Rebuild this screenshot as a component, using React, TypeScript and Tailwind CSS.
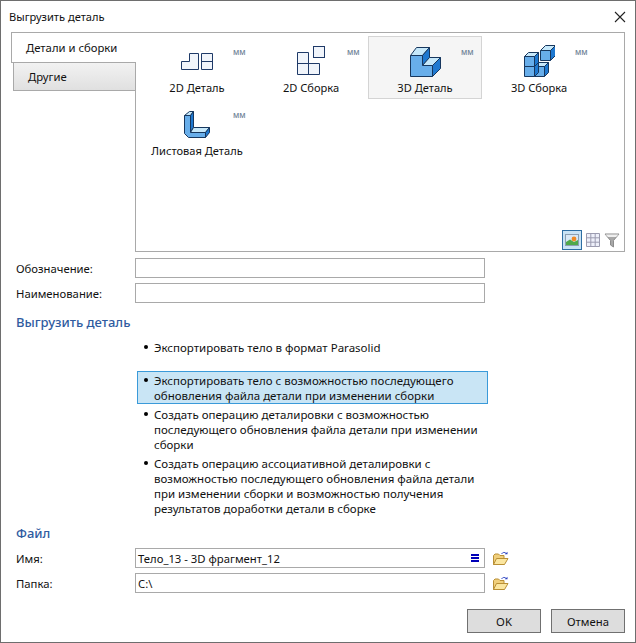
const EDGE = '#17375e';
const TOP = '#c6e8fa';
const FRONT = '#68aeea';
const SIDE = '#1e78d0';

function Cube({ x, y, s, d = 5 }: { x: number; y: number; s: number; d?: number }) {
  return (
    <g stroke={EDGE} strokeWidth="1" strokeLinejoin="round">
      <path d={`M${x} ${y}l${d} -${d}h${s}l-${d} ${d}z`} fill={TOP} />
      <path d={`M${x + s} ${y}l${d} -${d}v${s}l-${d} ${d}z`} fill={SIDE} />
      <rect x={x} y={y} width={s} height={s} fill={FRONT} />
    </g>
  );
}

const icons: Record<string, React.ReactNode> = {
  part2d: (
    <g fill="#f1f5fb" stroke="#1f3a68" strokeWidth="1">
      <path d="M0.5 24.5V16.5H8.5V8.5H17.5V24.5Z" />
      <path d="M20.5 8.5H31.5V24.5H20.5ZM20.5 16.5H31.5" />
    </g>
  ),
  asm2d: (
    <g fill="#f1f5fb" stroke="#1f3a68" strokeWidth="1">
      <rect x="18.5" y="1.5" width="11" height="11" />
      <path d="M2.5 7.5H13.5V18.5H24.5V29.5H2.5ZM2.5 18.5H13.5V29.5" />
    </g>
  ),
  part3d: (
    <g stroke={EDGE} strokeWidth="1" strokeLinejoin="round">
      <path d="M1.5 10.5L7.5 2.5H20.5L13.5 10.5Z" fill={TOP} />
      <path d="M13.5 10.5L20.5 2.5V12.5L13.5 20.5Z" fill={SIDE} />
      <path d="M13.5 20.5L20.5 12.5H31.5L23.5 20.5Z" fill={TOP} />
      <path d="M23.5 20.5L31.5 12.5V23.5L23.5 31.5Z" fill={SIDE} />
      <path d="M1.5 10.5V31.5H23.5V20.5H13.5V10.5Z" fill={FRONT} />
    </g>
  ),
  asm3d: (
    <g>
      <Cube x={17.5} y={5.5} s={10} />
      <Cube x={11.5} y={21.5} s={10} d={4} />
      <Cube x={1.5} y={21.5} s={10} d={4} />
      <Cube x={1.5} y={11.5} s={10} d={4} />
    </g>
  ),
  sheet: (
    <g stroke={EDGE} strokeWidth="1" strokeLinejoin="round">
      <path d="M3.5 7.5L8.5 3.5H12.5L9.5 7.5Z" fill={TOP} />
      <path d="M9.5 7.5L12.5 3.5V19.5L9.5 24.5Z" fill={SIDE} />
      <path d="M9.5 24.5L12.5 19.5H28.5L24.5 24.5Z" fill={TOP} />
      <path d="M24.5 24.5L28.5 19.5V24.5L24.5 29.5Z" fill={SIDE} />
      <path d="M3.5 7.5H9.5V24.5H24.5V29.5H7.5L3.5 25.5Z" fill={FRONT} />
    </g>
  ),
};

const items = [
  { label: '2D Деталь', icon: 'part2d' },
  { label: '2D Сборка', icon: 'asm2d' },
  { label: '3D Деталь', icon: 'part3d', selected: true },
  { label: '3D Сборка', icon: 'asm3d' },
  { label: 'Листовая Деталь', icon: 'sheet' },
];

const options = [
  { lines: ['Экспортировать тело в формат Parasolid'], className: 'mb-[16px]' },
  {
    lines: ['Экспортировать тело с возможностью последующего', 'обновления файла детали при изменении сборки'],
    className: 'mb-[3px]',
    active: true,
  },
  {
    lines: [
      'Создать операцию деталировки с возможностью',
      'последующего обновления файла детали при изменении',
      'сборки',
    ],
    className: 'mb-[4px]',
  },
  {
    lines: [
      'Создать операцию ассоциативной деталировки с',
      'возможностью последующего обновления файла детали',
      'при изменении сборки и возможностью получения',
      'результатов доработки детали в сборке',
    ],
  },
];

function FolderIcon() {
  return (
    <svg width="17" height="15" viewBox="0 0 17 15" className="ml-[7px]">
      <path d="M1.5 13.5V4.5L3 3H6.5L8 4.5H12V13.5Z" fill="#f0cf7c" stroke="#b98f35" />
      <path d="M1.5 13.5L4.5 7.5H16L12.5 13.5Z" fill="#fbe6a0" stroke="#b98f35" />
      <path d="M9.5 3C10.8 1 12.8 1 14 2.4" fill="none" stroke="#3a50c8" />
      <path d="M12.8 3.2H15.5V0.8Z" fill="#2a3fc0" />
    </svg>
  );
}

function Field({ label, value, menu }: { label: string; value?: string; menu?: boolean }) {
  return (
    <div className="flex items-center h-[20px]">
      <div className="w-[119px]">{label}</div>
      <div className="w-[350px] h-[20px] border border-[#a9a9a9] flex items-center justify-between pl-[2px] pr-[5px]">
        <span>{value}</span>
        {menu && (
          <div className="flex flex-col gap-[1px] w-[8px]">
            <div className="h-[2px] bg-[#0000b8]" />
            <div className="h-[2px] bg-[#0000b8]" />
            <div className="h-[2px] bg-[#0000b8]" />
          </div>
        )}
      </div>
    </div>
  );
}

export default function App() {
  return (
    <div className="relative w-[636px] h-[643px] box-border border border-[#6e6e6e] bg-white text-[11.3px] leading-[15px] text-[#111] font-['Noto_Sans','Liberation_Sans',sans-serif] overflow-hidden">
      <div className="h-[31px] flex items-center justify-between pl-[8px] pr-[9px] text-[11.1px]">
        <span>Выгрузить деталь</span>
        <svg width="12" height="12" viewBox="0 0 12 12">
          <path d="M1 1L11 11M11 1L1 11" stroke="#222" strokeWidth="1.1" />
        </svg>
      </div>

      <div className="flex h-[220px] ml-[10px]">
        <div className="w-[124px] shrink-0">
          <div className="relative z-10 w-[125px] h-[31px] bg-white border-t border-l border-b border-[#a9a9a9] flex items-center pl-[14px]">
            Детали и сборки
          </div>
          <div className="ml-[2px] h-[28px] bg-gradient-to-b from-[#f2f2f2] to-[#e0e0e0] border-l border-b border-[#a9a9a9] flex items-center pl-[14px]">
            Другие
          </div>
        </div>
        <div className="w-[490px] border border-[#a9a9a9] flex flex-col pl-[4px] pt-[3px]">
          <div className="grid grid-cols-[repeat(4,114px)] auto-rows-[63px] flex-1">
            {items.map((item) => (
              <div
                key={item.label}
                className={`relative flex flex-col items-center pt-[9px] border ${
                  item.selected ? 'bg-[#f5f5f5] border-[#d4d4d4]' : 'border-transparent'
                }`}
              >
                <svg width="32" height="32" viewBox="0 0 32 32" className="-mt-px">
                  {icons[item.icon]}
                </svg>
                <span className="absolute left-0 right-0 top-[43px] text-center whitespace-nowrap text-[11.1px]">{item.label}</span>
                <span className="absolute left-[92px] top-[11px] text-[8px] leading-[8px] font-medium text-[#6e8296]">мм</span>
              </div>
            ))}
          </div>
          <div className="flex items-center justify-end gap-[3px] pr-[4px] pb-[1px] h-[22px]">
            <div className="w-[20px] h-[20px] bg-[#c9e3f5] border border-[#2d6ea3] flex items-center justify-center">
              <svg width="14" height="12" viewBox="0 0 14 12">
                <rect x="0.5" y="0.5" width="13" height="11" fill="#d8e8f6" stroke="#8a9fb2" />
                <path d="M1 11V8L5 5.5L9 8L13 6V11Z" fill="#4fa84a" />
                <circle cx="9" cy="5" r="2.4" fill="#f08a24" />
              </svg>
            </div>
            <svg width="16" height="16" viewBox="0 0 16 16">
              <path
                d="M1.5 1.5H14.5V14.5H1.5ZM1.5 5.8H14.5M1.5 10.2H14.5M5.8 1.5V14.5M10.2 1.5V14.5"
                fill="#eef0fa"
                stroke="#9c9cb0"
              />
            </svg>
            <svg width="16" height="16" viewBox="0 0 16 16">
              <path d="M1 2H15L9.5 8.5V15L6.5 13V8.5Z" fill="#a8a8a8" stroke="#8c8c8c" />
              <path d="M1.5 2.5H14.5L12 5H4Z" fill="#efefef" />
            </svg>
          </div>
        </div>
      </div>

      <div className="mt-[6px] pl-[15px] flex flex-col gap-[5px]">
        <Field label="Обозначение:" />
        <Field label="Наименование:" />
      </div>

      <div className="mt-[11px] pl-[15px] h-[16px] text-[13px] leading-[16px] font-medium text-[#2f5b9f]">Выгрузить деталь</div>

      <div className="mt-[10px] ml-[136px] w-[351px] text-[11.5px]">
        {options.map((option) => (
          <div
            key={option.lines[0]}
            className={`flex items-start pl-[6px] ${option.className ?? ''} ${
              option.active ? 'bg-[#c9e5f5] border border-[#3a9ad9] pt-[1px]' : 'border-x border-transparent'
            }`}
          >
            <div className="w-[4px] h-[4px] rounded-full bg-black mt-[5px] mr-[6px] shrink-0" />
            <div className="whitespace-nowrap">
              {option.lines.map((line) => (
                <div key={line}>{line}</div>
              ))}
            </div>
          </div>
        ))}
      </div>

      <div className="mt-[9px] pl-[15px] h-[16px] text-[13px] leading-[16px] font-medium text-[#2f5b9f]">Файл</div>

      <div className="mt-[7px] pl-[15px] flex flex-col gap-[5px]">
        <div className="flex items-center">
          <Field label="Имя:" value="Тело_13 - 3D фрагмент_12" menu />
          <FolderIcon />
        </div>
        <div className="flex items-center">
          <Field label="Папка:" value="C:\" />
          <FolderIcon />
        </div>
      </div>

      <div className="mt-[16px] pr-[10px] flex justify-end gap-[10px]">
        <button className="w-[74px] h-[24px] bg-[#dddddd] border border-[#707070]">OK</button>
        <button className="w-[74px] h-[24px] bg-[#dddddd] border border-[#707070]">Отмена</button>
      </div>
    </div>
  );
}
